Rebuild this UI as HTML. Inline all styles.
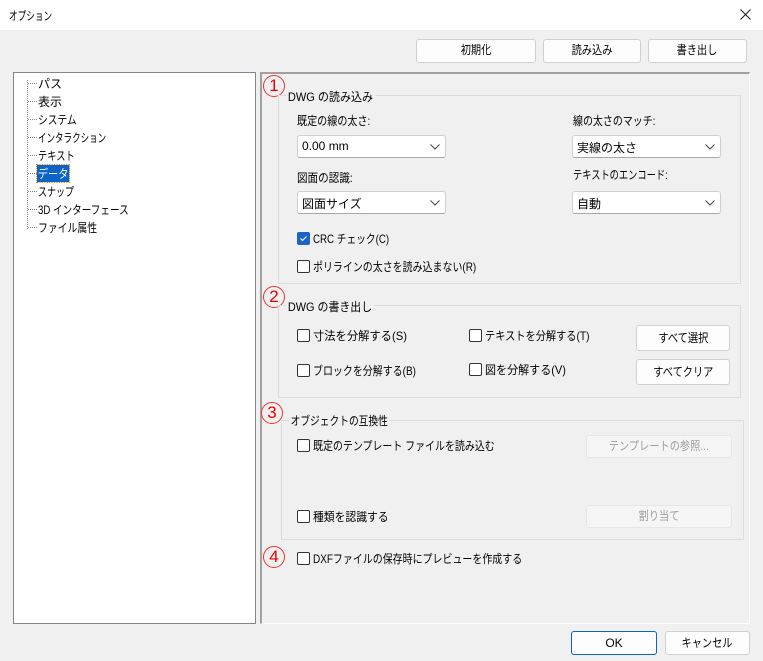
<!DOCTYPE html>
<html><head><meta charset="utf-8"><style>
*{margin:0;padding:0;box-sizing:border-box}
body{width:763px;height:661px;background:#f0f0f0;font-family:"Liberation Sans","Noto Sans CJK JP",sans-serif;font-size:12px;color:#000;position:relative;overflow:hidden}
.a{position:absolute;white-space:nowrap;transform-origin:0 50%}
.btn{position:absolute;background:#fdfdfd;border:1px solid #d0d0d0;border-radius:3px;text-align:center;font-size:12px;white-space:nowrap}
.btn span{display:inline-block;transform:scaleX(.85)}
.dis{background:#f5f5f5;border-color:#e6e6e6;color:#9e9e9e}
.cb{position:absolute;width:13px;height:13px;border:1px solid #333;border-radius:2px;background:#fff}
.combo{position:absolute;background:#fff;border:1px solid #d0d0d0;border-bottom-color:#a8a8a8;border-radius:3px;height:23px;padding:3px 0 0 4px;font-size:12px;white-space:nowrap}
.combo svg{position:absolute;right:5px;top:8px}
.grp{position:absolute;border:1px solid #dcdcdc}
.num{position:absolute;width:22px;height:22px;border:1.5px solid #e33;border-radius:50%;color:#e00;font-size:17px;line-height:19px;text-align:center}
.t{position:absolute;left:38px;font-size:12px;white-space:nowrap;transform-origin:0 50%;transform:scaleX(.78)}
</style></head><body>
<div class="a" style="left:0;top:0;width:763px;height:30px;background:#fff"></div>
<div class="a" style="left:9px;top:7px;transform:scaleX(.72)">オプション</div>
<svg class="a" style="left:740px;top:9px" width="11" height="11"><path d="M0.5 0.5L10.5 10.5M10.5 0.5L0.5 10.5" stroke="#222" stroke-width="1.1"/></svg>

<div class="btn" style="left:416px;top:39px;width:120px;height:24px;line-height:21px"><span>初期化</span></div>
<div class="btn" style="left:543px;top:39px;width:98px;height:24px;line-height:21px"><span>読み込み</span></div>
<div class="btn" style="left:648px;top:39px;width:99px;height:24px;line-height:21px"><span>書き出し</span></div>

<div class="a" style="left:13px;top:72px;width:243px;height:552px;background:#fff;border:1px solid #828790"></div>
<div class="a" style="left:27px;top:80px;height:149px;border-left:1px dotted #888"></div>
<div class="a" style="left:28px;top:83px">
<div style="position:absolute;left:0;top:0;width:9px;border-top:1px dotted #888"></div>
<div style="position:absolute;left:0;top:18px;width:9px;border-top:1px dotted #888"></div>
<div style="position:absolute;left:0;top:36px;width:9px;border-top:1px dotted #888"></div>
<div style="position:absolute;left:0;top:54px;width:9px;border-top:1px dotted #888"></div>
<div style="position:absolute;left:0;top:72px;width:9px;border-top:1px dotted #888"></div>
<div style="position:absolute;left:0;top:90px;width:9px;border-top:1px dotted #888"></div>
<div style="position:absolute;left:0;top:108px;width:9px;border-top:1px dotted #888"></div>
<div style="position:absolute;left:0;top:126px;width:9px;border-top:1px dotted #888"></div>
<div style="position:absolute;left:0;top:144px;width:9px;border-top:1px dotted #888"></div>
</div>
<div class="t" style="top:75px;transform:none">パス</div>
<div class="t" style="top:93px;transform:none">表示</div>
<div class="t" style="top:111px;transform:scaleX(.81)">システム</div>
<div class="t" style="top:129px;transform:scaleX(.71)">インタラクション</div>
<div class="t" style="top:147px;transform:scaleX(.77)">テキスト</div>
<div class="t" style="top:165px;left:37px;background:#0a64c8;color:#fff;padding:0 1px;outline:1px dotted #e08000;transform:scaleX(.85)">データ</div>
<div class="t" style="top:183px;transform:scaleX(.75)">スナップ</div>
<div class="t" style="top:201px;transform:scaleX(.8)">3D インターフェース</div>
<div class="t" style="top:219px;transform:scaleX(.82)">ファイル属性</div>

<div class="a" style="left:260px;top:72px;width:490px;height:552px;border-top:2px solid #a0a0a0;border-left:2px solid #a0a0a0;border-right:1px solid #fff;border-bottom:1px solid #fff"></div>

<div class="num" style="left:263px;top:75px">1</div>
<div class="grp" style="left:278px;top:95px;width:463px;height:189px"></div>
<div class="a" style="left:286px;top:88px;background:#f0f0f0;padding:0 2px;transform:scaleX(.92)">DWG の読み込み</div>
<div class="a" style="left:297px;top:112px;transform:scaleX(.84)">既定の線の太さ:</div>
<div class="combo" style="left:297px;top:135px;width:149px">0.00 mm<svg width="10" height="6"><path d="M0.5 0.5L5 5L9.5 0.5" stroke="#444" fill="none"/></svg></div>
<div class="a" style="left:573px;top:112px;transform:scaleX(.83)">線の太さのマッチ:</div>
<div class="combo" style="left:572px;top:135px;width:149px">実線の太さ<svg width="10" height="6"><path d="M0.5 0.5L5 5L9.5 0.5" stroke="#444" fill="none"/></svg></div>
<div class="a" style="left:297px;top:169px;transform:scaleX(.88)">図面の認識:</div>
<div class="combo" style="left:297px;top:191px;width:149px">図面サイズ<svg width="10" height="6"><path d="M0.5 0.5L5 5L9.5 0.5" stroke="#444" fill="none"/></svg></div>
<div class="a" style="left:573px;top:166px;transform:scaleX(.77)">テキストのエンコード:</div>
<div class="combo" style="left:572px;top:191px;width:149px">自動<svg width="10" height="6"><path d="M0.5 0.5L5 5L9.5 0.5" stroke="#444" fill="none"/></svg></div>
<div class="cb" style="left:297px;top:232px;background:#1e64c8;border-color:#1e64c8"><svg width="11" height="11" style="position:absolute;left:0;top:0"><path d="M2.5 5.5L4.5 7.5L8.5 3.5" stroke="#fff" fill="none" stroke-width="1.1"/></svg></div>
<div class="a" style="left:313px;top:230px;transform:scaleX(.81)">CRC チェック(C)</div>
<div class="cb" style="left:297px;top:260px"></div>
<div class="a" style="left:313px;top:258px;transform:scaleX(.83)">ポリラインの太さを読み込まない(R)</div>

<div class="num" style="left:263px;top:286px">2</div>
<div class="grp" style="left:278px;top:305px;width:463px;height:93px"></div>
<div class="a" style="left:286px;top:298px;background:#f0f0f0;padding:0 2px;transform:scaleX(.91)">DWG の書き出し</div>
<div class="cb" style="left:297px;top:329px"></div>
<div class="a" style="left:313px;top:327px;transform:scaleX(.94)">寸法を分解する(S)</div>
<div class="cb" style="left:469px;top:329px"></div>
<div class="a" style="left:485px;top:327px;transform:scaleX(.85)">テキストを分解する(T)</div>
<div class="cb" style="left:297px;top:364px"></div>
<div class="a" style="left:313px;top:362px;transform:scaleX(.83)">ブロックを分解する(B)</div>
<div class="cb" style="left:469px;top:363px"></div>
<div class="a" style="left:485px;top:361px;transform:scaleX(.92)">図を分解する(V)</div>
<div class="btn" style="left:636px;top:325px;width:94px;height:26px;line-height:24px"><span>すべて選択</span></div>
<div class="btn" style="left:636px;top:359px;width:94px;height:26px;line-height:24px"><span>すべてクリア</span></div>

<div class="num" style="left:261px;top:402px">3</div>
<div class="grp" style="left:281px;top:420px;width:463px;height:120px"></div>
<div class="a" style="left:289px;top:412px;background:#f0f0f0;padding:0 2px;transform:scaleX(.81)">オブジェクトの互換性</div>
<div class="cb" style="left:297px;top:439px"></div>
<div class="a" style="left:313px;top:437px;transform:scaleX(.83)">既定のテンプレート ファイルを読み込む</div>
<div class="btn dis" style="left:586px;top:435px;width:146px;height:23px;line-height:21px"><span>テンプレートの参照...</span></div>
<div class="cb" style="left:297px;top:510px"></div>
<div class="a" style="left:313px;top:508px;transform:scaleX(.9)">種類を認識する</div>
<div class="btn dis" style="left:586px;top:505px;width:146px;height:23px;line-height:21px"><span>割り当て</span></div>

<div class="num" style="left:263px;top:546px">4</div>
<div class="cb" style="left:297px;top:552px"></div>
<div class="a" style="left:313px;top:550px;transform:scaleX(.83)">DXFファイルの保存時にプレビューを作成する</div>

<div class="btn" style="left:571px;top:631px;width:86px;height:24px;line-height:22px;border:1px solid #0a64c8">OK</div>
<div class="btn" style="left:665px;top:631px;width:85px;height:24px;line-height:22px"><span>キャンセル</span></div>
</body></html>
